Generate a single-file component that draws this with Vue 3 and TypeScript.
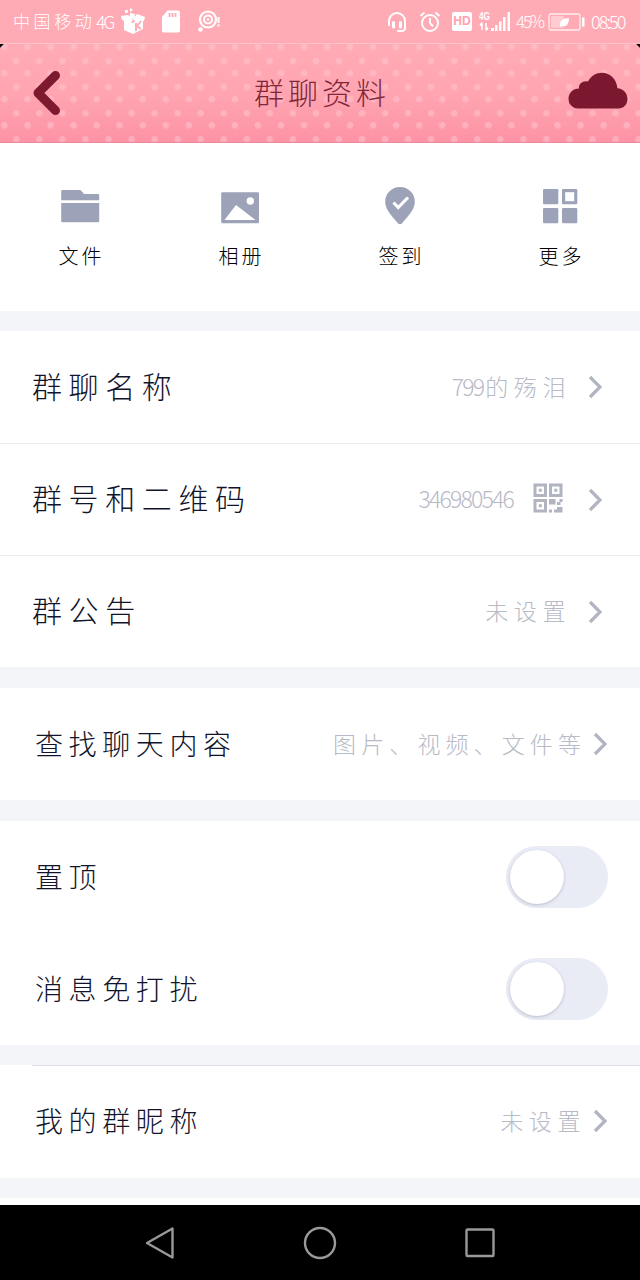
<script setup lang="ts">
/**
 * GroupProfile - group chat settings screen with shortcuts, info rows and switches.
 */

import { reactive } from "vue";

type ActionIcon = "folder" | "album" | "checkin" | "more";

interface Action {
  icon: ActionIcon;
  label: string;
}

interface InfoRow {
  label: string;
  value: string;
  numeric?: boolean;
  mixed?: boolean;
}

interface SwitchRow {
  label: string;
  enabled: boolean;
}

const actions: Action[] = [
  { icon: "folder", label: "文件" },
  { icon: "album", label: "相册" },
  { icon: "checkin", label: "签到" },
  { icon: "more", label: "更多" },
];

const infoRows: InfoRow[] = [
  { label: "群聊名称", value: "的殇泪", mixed: true },
  { label: "群号和二维码", value: "346980546", numeric: true },
  { label: "群公告", value: "未设置" },
];

const switches = reactive<SwitchRow[]>([
  { label: "置顶", enabled: false },
  { label: "消息免打扰", enabled: false },
]);
</script>

<template>
  <div class="screen">
    <!-- Status bar -->
    <div class="status">
      <span class="status__carrier">中国移动</span>
      <span class="status__net">4G</span>
      <svg class="status__box" width="25" height="27" viewBox="0 0 25 27" fill="#fff">
        <path d="M3 12l8 3 11-4v10l-10 5-9-4z" />
        <path d="M0 8l7-1 5 4-2 4-9-3zM12 11l4-5 8 3-1 4-8 2zM9 5l5 1-1 5-4-2zM4 2h3v3H4zM9 0l3 2-3 2z" />
        <path d="M15 15v8M20 13l-4 5 4 3" fill="none" stroke="#ffabb5" stroke-width="2" />
      </svg>
      <svg class="status__sd" width="20" height="23" viewBox="0 0 20 23">
        <path d="M6.500 .5h10.500q2 0 2 2v18q0 2-2 2H3q-2 0-2-2V7z" fill="#fff" />
        <path d="M8.500 3v4M11.500 3v4M14.500 3v4" stroke="#ffabb5" stroke-width="1.800" />
      </svg>
      <svg class="status__target" width="23" height="23" viewBox="0 0 23 23" fill="none" stroke="#fff">
        <circle cx="10" cy="9.500" r="8" stroke-width="2.200" />
        <circle cx="10" cy="9.500" r="4" stroke-width="2" />
        <circle cx="10" cy="9.500" r="1.300" fill="#fff" stroke="none" />
        <circle cx="2.500" cy="19.500" r="2.200" fill="#fff" stroke="none" />
        <path d="M20.500 7v6M20.500 14.500v2" stroke-width="2" />
      </svg>

      <div class="status__right">
        <svg width="20" height="22" viewBox="0 0 20 22" fill="none" stroke="#fff" stroke-width="2">
          <path d="M2 15V10a8 8 0 0 1 16 0v7q0 3-4 3h-4" />
          <path d="M6.500 11.500v4.500M13.500 11.500v4.500" stroke-width="3" stroke-linecap="round" />
        </svg>
        <svg class="status__alarm" width="22" height="22" viewBox="0 0 22 22" fill="none" stroke="#fff" stroke-width="2">
          <circle cx="11" cy="12" r="8" />
          <path d="M11 7v5l3 3.500M1.500 5l4-3.500M20.500 5l-4-3.500" />
        </svg>
        <span class="status__hd">HD</span>
        <svg class="status__signal" width="32" height="22" viewBox="0 0 32 22" fill="#fff">
          <text x="0" y="9" font-size="10" font-weight="700" textLength="11" lengthAdjust="spacingAndGlyphs">4G</text>
          <path d="M12 17h3v3h-3zM16 14h2.500v6H16zM20 10.500h2.500V20H20zM24 6h2.500v14H24zM28.500 1H31v19h-2.500z" />
          <path d="M3 19v-7M1 14.500l2-3M7 12v7M9 16.500l-2 3" fill="none" stroke="#fff" stroke-width="1.500" />
        </svg>
        <span class="status__percent">45%</span>
        <svg class="status__battery" width="37" height="18" viewBox="0 0 37 18">
          <rect x="1" y="1" width="31" height="16" rx="2" fill="none" stroke="#fff" stroke-opacity=".8" stroke-width="1.300" />
          <rect x="3" y="3" width="13" height="12" fill="#fff" fill-opacity=".4" />
          <path d="M12 14c-1-6 3-9 9-9 0 6-3 10-7 7.500z" fill="#fff" />
          <path d="M34 4.500h2.500v9H34z" fill="#fff" />
        </svg>
        <span class="status__time">08:50</span>
      </div>
    </div>

    <!-- Title bar -->
    <header class="header">
      <svg class="header__back" width="30" height="48" viewBox="0 0 30 48">
        <path d="M24.500 6.500L7 24l17.500 17.500" fill="none" stroke="#7d1a30" stroke-width="9" stroke-linecap="round" stroke-linejoin="round" />
      </svg>
      <h1 class="header__title">群聊资料</h1>
      <svg class="header__cloud" width="60" height="37" viewBox="0 0 60 37">
        <path
          d="M9.500 36.500A9.300 9.300 0 0 1 .5 27C.5 21 5 16.500 11 16.500c-.5-5 4-8 9-7C23 4 28 .8 34 .8c8 0 14.500 6.500 15.500 15.400C55 16.500 59.500 21 59.500 27c0 5.500-4 9.500-9 9.500z"
          fill="#7b1830"
        />
      </svg>
    </header>

    <!-- Shortcuts -->
    <nav class="actions">
      <div v-for="action in actions" :key="action.icon" class="action">
        <svg width="40" height="40" viewBox="0 0 40 40" fill="#9ca2b8">
          <template v-if="action.icon === 'folder'">
            <path d="M2.500 4h17q1.200 0 2 1l2.500 3h14q1.200 0 1.200 1.200V14.300H1.200V5.200Q1.200 4 2.500 4z" />
            <path d="M1.200 17h38v18q0 1.300-1.300 1.300H2.500q-1.300 0-1.300-1.300z" />
          </template>
          <template v-else-if="action.icon === 'album'">
            <rect x="1.200" y="6.300" width="37.800" height="31" rx="1.200" />
            <circle cx="30.300" cy="15" r="3.700" fill="#fff" />
            <path d="M4.500 34L16 19l19.500 15z" fill="#fff" />
          </template>
          <template v-else-if="action.icon === 'checkin'">
            <path d="M20 1A14.800 14.800 0 0 0 5.200 15.800C5.200 24 12 30 17.500 36.800q2.500 3 5 0C28 30 34.800 24 34.800 15.800A14.800 14.800 0 0 0 20 1z" />
            <path d="M13.500 16.500l4.700 5L28 11.500" fill="none" stroke="#fff" stroke-width="3.200" />
          </template>
          <template v-else>
            <rect x="3" y="3" width="15.300" height="15.300" rx="1.200" />
            <rect x="3" y="22" width="15.300" height="15.300" rx="1.200" />
            <rect x="22" y="22" width="15.300" height="15.300" rx="1.200" />
            <rect x="22" y="3" width="15.300" height="15.300" rx="1.200" />
            <rect x="25.200" y="6.200" width="9" height="9" fill="#fff" />
          </template>
        </svg>
        <span class="action__label">{{ action.label }}</span>
      </div>
    </nav>

    <!-- Group info -->
    <section class="group group--info">
      <div v-for="row in infoRows" :key="row.label" class="row">
        <span class="row__label">{{ row.label }}</span>
        <span v-if="row.mixed" class="row__digits">799</span>
        <span :class="row.numeric ? 'row__digits' : 'row__value'">{{ row.value }}</span>
        <svg v-if="row.numeric" class="row__qr" width="30" height="30" viewBox="0 0 30 30" fill="#b1b4c1">
          <path
            fill-rule="evenodd"
            d="M.5.5h13.500V14H.5zM3.500 3.500V11H11V3.500zM16 .5h13.500V14H16zM19 3.500V11h7.500V3.500zM.5 16h13.500v13.500H.5zM3.500 19v7.500H11V19z"
          />
          <path d="M5.800 5.800h3v3h-3zM21.300 5.800h3v3h-3zM5.800 21.300h3v3h-3zM16 16h6.500v5.500H16zM26.500 16h3v3h-2v3h-3.500v-3h2.500zM16 26.500h3v3h-3zM21 26.500h3V24h5.500v5.500H21z" />
        </svg>
        <svg class="row__chevron" width="14" height="24" viewBox="0 0 14 24">
          <path d="M2 2l10 10L2 22" />
        </svg>
      </div>
    </section>

    <section class="group">
      <div class="row">
        <span class="row__label">查找聊天内容</span>
        <span class="row__value row__value--long">图片、视频、文件等</span>
        <svg class="row__chevron" width="14" height="24" viewBox="0 0 14 24">
          <path d="M2 2l10 10L2 22" />
        </svg>
      </div>
    </section>

    <section class="group">
      <div v-for="item in switches" :key="item.label" class="row">
        <span class="row__label">{{ item.label }}</span>
        <button
          type="button"
          class="switch"
          :class="{ 'switch--on': item.enabled }"
          role="switch"
          :aria-checked="item.enabled"
          @click="item.enabled = !item.enabled"
        >
          <span class="switch__knob" />
        </button>
      </div>
    </section>

    <section class="group group--nickname">
      <div class="row">
        <span class="row__label">我的群昵称</span>
        <span class="row__value">未设置</span>
        <svg class="row__chevron" width="14" height="24" viewBox="0 0 14 24">
          <path d="M2 2l10 10L2 22" />
        </svg>
      </div>
    </section>

    <div class="next-group" />

    <!-- System navigation -->
    <footer class="navbar">
      <svg width="32" height="36" viewBox="0 0 32 36">
        <path d="M28.500 3.500v29L3 18z" />
      </svg>
      <svg width="36" height="36" viewBox="0 0 36 36">
        <circle cx="18" cy="18" r="15" />
      </svg>
      <svg width="32" height="36" viewBox="0 0 32 36">
        <rect x="2.500" y="4.500" width="27" height="26.500" rx="1" />
      </svg>
    </footer>
  </div>
</template>

<style>
body {
  margin: 0;
  background: #000;
}
</style>

<style scoped>
.screen {
  display: flex;
  flex-direction: column;
  width: 640px;
  height: 1280px;
  overflow: hidden;
  background: #f4f5f9;
  font-family: "Noto Sans CJK SC", "Noto Sans", sans-serif;
  font-weight: 300;
  color: #11142a;
}

.screen svg {
  flex: none;
  display: block;
}

.status {
  display: flex;
  align-items: center;
  box-sizing: border-box;
  height: 43px;
  padding: 0 13px;
  background: #ffabb5;
  color: #fff;
  font-size: 17px;
  line-height: 24px;
  white-space: nowrap;
}

.status__carrier,
.status__net,
.status__percent,
.status__time {
  padding-bottom: 2px;
}

.status__carrier {
  width: 83px;
  letter-spacing: 3.6px;
}

.status__net {
  width: 18px;
  font-size: 18px;
  letter-spacing: -2.5px;
}

.status__box {
  margin-left: 7px;
}

.status__sd {
  margin-left: 15px;
}

.status__target {
  margin-left: 17px;
}

.status__right {
  display: flex;
  align-items: center;
  margin-left: auto;
}

.status__alarm {
  margin-left: 12px;
}

.status__hd {
  width: 20px;
  height: 19px;
  margin-left: 11px;
  border-radius: 2px;
  background: #fff;
  color: #ffa0ae;
  font-family: "Liberation Sans", Arial, sans-serif;
  font-size: 12px;
  font-weight: 700;
  line-height: 19px;
  text-align: center;
}

.status__signal {
  margin-left: 7px;
  font-family: "Liberation Sans", Arial, sans-serif;
}

.status__percent {
  width: 27px;
  margin-left: 5px;
  letter-spacing: -2.2px;
}

.status__battery {
  margin-left: 5px;
}

.status__time {
  width: 36px;
  margin-left: 6px;
  font-size: 18px;
  letter-spacing: -1.9px;
}

.header {
  display: flex;
  align-items: center;
  justify-content: space-between;
  box-sizing: border-box;
  height: 100px;
  padding: 0 12px 0 32px;
  border-top: 1px solid #ffc3ca;
  border-bottom: 1px solid #ec899c;
  background:
    linear-gradient(135deg, #000 2.5px, transparent 3px) 0 0 / 5px 5px no-repeat,
    linear-gradient(225deg, #000 2.5px, transparent 3px) 100% 0 / 5px 5px no-repeat,
    radial-gradient(circle at 11.5px 13px, rgba(255, 200, 210, 0.5) 2.8px, transparent 3.8px) 4.8px 4px / 23.05px 26.1px,
    radial-gradient(circle at 11.5px 13px, rgba(255, 200, 210, 0.5) 2.8px, transparent 3.8px) -7.1px -10px / 23.05px 26.1px,
    linear-gradient(#ffabb5, #ffa5b1 50%, #fd93a5);
}

.header__back {
  margin-left: -1px;
}

.header__title {
  margin: 0 0 5px 15px;
  color: #82263a;
  font-size: 30px;
  font-weight: 300;
  letter-spacing: 4px;
  line-height: 40px;
}

.header__cloud {
  margin-bottom: 5px;
}

.actions {
  display: grid;
  grid-template-columns: repeat(4, 1fr);
  box-sizing: border-box;
  height: 168px;
  padding-top: 43px;
  background: #fff;
}

.action {
  display: flex;
  flex-direction: column;
  align-items: center;
  gap: 15px;
}

.action__label {
  margin-right: -3px;
  color: #000;
  font-size: 20px;
  letter-spacing: 3px;
  line-height: 30px;
}

.group {
  margin-top: 21px;
  background: #fff;
}

.row {
  display: flex;
  align-items: center;
  box-sizing: border-box;
  height: 112px;
  padding: 0 33px 0 35px;
}

.row__label {
  margin-right: auto;
  padding-bottom: 3px;
  font-size: 28px;
  letter-spacing: 5.6px;
  line-height: 40px;
}

.row__value,
.row__digits {
  padding-bottom: 3px;
  color: #b8bac6;
  font-size: 23px;
  letter-spacing: 5.6px;
  line-height: 34px;
}

.row__value {
  margin-right: 7px;
}

.row__value--long {
  letter-spacing: 5.1px;
}

.row__digits {
  letter-spacing: -1.8px;
}

.row__digits + .row__value {
  margin-left: 2px;
}

.row__qr {
  margin: 0 11px 3px 20px;
}

.row__chevron path {
  fill: none;
  stroke: #b1b4c1;
  stroke-width: 3.2;
}

.group--info {
  margin-top: 20px;
}

.group--info .row {
  padding: 0 38px 0 32px;
}

.group--info .row + .row {
  border-top: 1px solid #eeeef1;
}

.group--info .row__label {
  padding-bottom: 5px;
  font-size: 30px;
  letter-spacing: 6.6px;
}

.group--info .row__value {
  margin-right: 3px;
}

.group--info .row__chevron {
  margin-left: 14px;
}

.group--nickname {
  margin-top: 20px;
  padding-bottom: 1px;
  background: linear-gradient(#dfe1e6, #dfe1e6) 32px 0 / 608px 1px no-repeat #fff;
}

.switch {
  width: 102px;
  height: 62px;
  margin: 0 -1px 1px 0;
  padding: 3px;
  border: none;
  border-radius: 31px;
  background: #e9ebf5;
  cursor: pointer;
}

.switch__knob {
  display: block;
  width: 54px;
  height: 54px;
  margin-left: 1px;
  border-radius: 50%;
  background: #fff;
  box-shadow: 0 1px 3px rgba(100, 104, 140, 0.35);
  transition: transform 0.2s;
}

.switch--on {
  background: #12b7f5;
}

.switch--on .switch__knob {
  transform: translateX(40px);
}

.next-group {
  flex: 1;
  margin-top: 20px;
  background: #fff;
}

.navbar {
  display: flex;
  align-items: center;
  justify-content: center;
  gap: 126px;
  height: 75px;
  background: #000;
}

.navbar svg * {
  fill: none;
  stroke: #999;
  stroke-width: 2.4;
  stroke-linejoin: round;
}
</style>
